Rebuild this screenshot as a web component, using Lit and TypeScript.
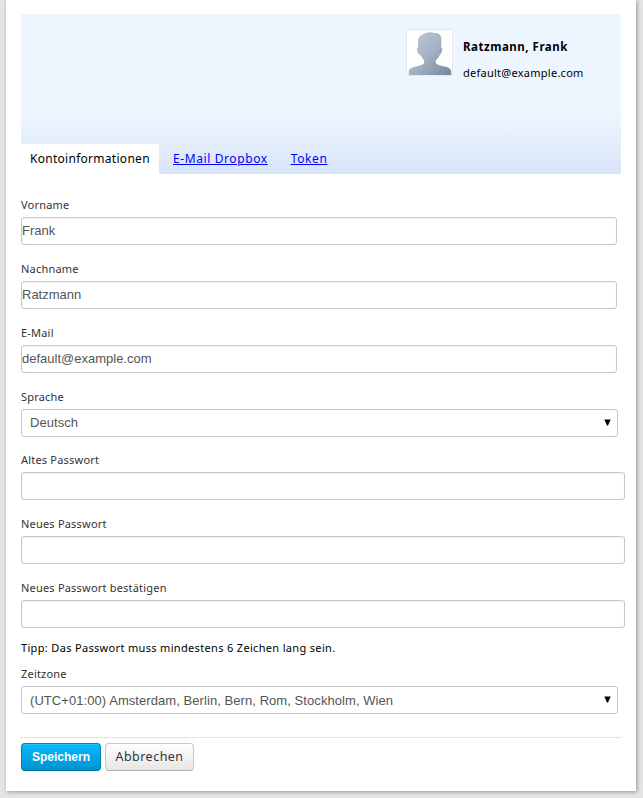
import { LitElement, html, css, svg } from "lit";
import { customElement, property } from "lit/decorators.js";

type Kind = "text" | "select" | "password";

@customElement("form-field")
class FormField extends LitElement {
  @property() label = "";
  @property() value = "";
  @property() kind: Kind = "text";

  static styles = css`
    :host { display: block; }
    .label {
      display: block;
      height: 24px;
      font: 11px/24px "Noto Sans", sans-serif;
      letter-spacing: 0.2px;
      color: #333;
      white-space: nowrap;
    }
    .box {
      box-sizing: border-box;
      height: 28px;
      border: 1px solid #c8c8c8;
      border-radius: 3px;
      background: #fff;
      font: 13px/26px "Liberation Sans", Arial, sans-serif;
      color: #555;
      display: flex;
      align-items: center;
      justify-content: space-between;
      white-space: nowrap;
    }
    .text { width: 596px; box-shadow: inset 0 1px 2px rgba(0, 0, 0, 0.06); }
    .password { width: 604px; box-shadow: inset 0 1px 2px rgba(0, 0, 0, 0.06); }
    .select { width: 597px; padding: 0 6px 0 8px; letter-spacing: 0.065px; }
    .arrow { display: block; width: 7px; height: 7px; margin-bottom: 1px; fill: #000; }
    :host([low]) .value { padding-top: 2px; line-height: 24px; }
  `;

  render() {
    return html`
      <span class="label">${this.label}</span>
      <div class="box ${this.kind}">
        <span class="value">${this.value}</span>
        ${this.kind === "select"
          ? html`<svg class="arrow" viewBox="0 0 7 7"><path d="M0.3 0.5H6.7L4 6.5H3Z" /></svg>`
          : ""}
      </div>
    `;
  }
}

const silhouette = svg`
  <defs>
    <linearGradient id="shade" x1="0" y1="0" x2="1" y2="1">
      <stop offset="0" stop-color="#bdcad6" />
      <stop offset="0.5" stop-color="#a3b2c4" />
      <stop offset="1" stop-color="#74889f" />
    </linearGradient>
  </defs>
  <path fill="url(#shade)" d="M1.800 45V42C1.800 38.800 5 37.500 9 36.600C13 35.600 16.500 34.700 17.200 32.800C17.500 31.500 17 30 15.500 28C14.300 26.300 13.200 25.800 12.800 24.600C11 24.300 9.600 20 10 18.500C10.200 17.800 10.900 17.600 11.100 17.200C10.800 11 10.800 7.300 13.800 5.400C15.500 4.500 16.500 4.200 18 3.300C21.500 1.800 25.500 2 27.500 3C30 2.500 34 4 34.300 8C34.600 11 34.200 14 34.100 17.300C35 17.700 35.300 18.500 35.200 19.500C35 22 34 24.500 32.800 24.700C32.400 26 31.300 27.800 29.900 29.300C29 30.300 28.500 31.300 28.700 32.800C29.500 34.700 33.500 35.600 37.500 36.600C41.500 37.500 44.200 38.800 44.200 42V45Z" />
`;

@customElement("app-root")
class AppRoot extends LitElement {
  static styles = css`
    :host {
      display: block;
      box-sizing: border-box;
      height: 798px;
      padding: 0 7px 7px 6px;
      background: #e4e4e4;
      overflow: hidden;
      font: 11px/16px "Noto Sans", sans-serif;
      color: #000;
    }
    .card {
      box-sizing: border-box;
      height: 791px;
      padding: 14px 0 0 15px;
      background: #fff;
      box-shadow: 1px 1px 4px rgba(0, 0, 0, 0.35);
    }
    .head {
      width: 600px;
      height: 160px;
      display: flex;
      flex-direction: column;
      justify-content: space-between;
      background: linear-gradient(#edf6ff 0, #edf6ff 100px, #d8e4f8 160px);
    }
    .user { display: flex; margin: 15px 0 0 385px; gap: 10px; }
    .avatar {
      box-sizing: border-box;
      width: 47px;
      height: 47px;
      border: 1px solid #e8e8e8;
      background: #fff;
      flex: none;
    }
    .avatar svg { display: block; width: 45px; height: 45px; }
    .who { padding-top: 10px; white-space: nowrap; }
    .name { font-weight: 700; font-size: 11.500px; letter-spacing: 0.52px; margin-bottom: 10px; }
    .mail { letter-spacing: 0.26px; }
    .tabs { display: flex; height: 30px; font-size: 12px; line-height: 30px; letter-spacing: 0.6px; white-space: nowrap; }
    .tab { box-sizing: border-box; width: 138px; padding-left: 9px; background: #fff; letter-spacing: 0.28px; }
    .link { color: #00f; text-decoration: underline; margin-left: 14px; }
    .link + .link { margin-left: 23px; }
    .fields { display: grid; gap: 12px; padding-top: 19px; }
    .secret { padding-top: 11px; }
    .tip { height: 24px; line-height: 24px; margin: 8px 0 2px; letter-spacing: 0.33px; }
    .actions {
      display: flex;
      gap: 4px;
      width: 600px;
      margin-top: 23px;
      padding-top: 5px;
      border-top: 1px dotted #c3c3dc;
    }
    .btn {
      box-sizing: border-box;
      height: 28px;
      padding: 0;
      border: 1px solid #bbb;
      border-radius: 4px;
      white-space: nowrap;
    }
    .primary {
      width: 80px;
      border-color: #0082b4 #0082b4 #00719c;
      background: linear-gradient(#05b9fc, #0094cf);
      box-shadow: inset 0 1px 0 rgba(255, 255, 255, 0.15);
      color: #fff;
      font: 700 12px "Liberation Sans", Arial, sans-serif;
    }
    .plain {
      width: 89px;
      padding-bottom: 2px;
      border-color: #c8c8c8 #c8c8c8 #b0b0b0;
      background: linear-gradient(#fff, #e6e6e6);
      color: #333;
      font: 12.500px "Noto Sans", sans-serif;
      letter-spacing: 0.48px;
    }
  `;

  render() {
    return html`
      <main class="card">
        <header class="head">
          <div class="user">
            <div class="avatar"><svg viewBox="0 0 45 45">${silhouette}</svg></div>
            <div class="who">
              <div class="name">Ratzmann, Frank</div>
              <div class="mail">default@example.com</div>
            </div>
          </div>
          <nav class="tabs">
            <span class="tab">Kontoinformationen</span>
            <a class="link" href="#dropbox">E-Mail Dropbox</a>
            <a class="link" href="#token">Token</a>
          </nav>
        </header>
        <section class="fields">
          <form-field label="Vorname" value="Frank"></form-field>
          <form-field label="Nachname" value="Ratzmann"></form-field>
          <form-field label="E-Mail" value="default@example.com"></form-field>
          <form-field label="Sprache" value="Deutsch" kind="select"></form-field>
        </section>
        <section class="fields secret">
          <form-field label="Altes Passwort" kind="password"></form-field>
          <form-field label="Neues Passwort" kind="password"></form-field>
          <form-field label="Neues Passwort bestätigen" kind="password"></form-field>
        </section>
        <div class="tip">Tipp: Das Passwort muss mindestens 6 Zeichen lang sein.</div>
        <form-field low label="Zeitzone" value="(UTC+01:00) Amsterdam, Berlin, Bern, Rom, Stockholm, Wien" kind="select"></form-field>
        <div class="actions">
          <button class="btn primary">Speichern</button>
          <button class="btn plain">Abbrechen</button>
        </div>
      </main>
    `;
  }
}
